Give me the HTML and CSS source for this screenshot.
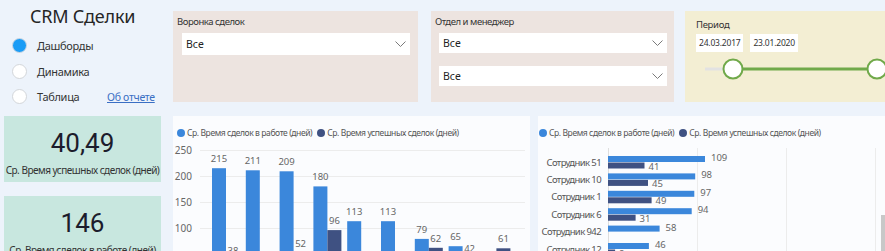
FILE: index.html
```html
<!DOCTYPE html>
<html lang="ru">
<head>
<meta charset="utf-8">
<title>CRM Сделки</title>
<link rel="stylesheet" href="styles.css">
</head>
<body>
<div class="page">
  <aside class="side">
    <div class="brand">CRM Сделки</div>
    <ul class="nav">
      <li class="nav-item"><span class="radio radio-on"></span><span class="nav-label">Дашборды</span></li>
      <li class="nav-item"><span class="radio"></span><span class="nav-label">Динамика</span></li>
      <li class="nav-item"><span class="radio"></span><span class="nav-label">Таблица</span><a class="about" href="#">Об отчете</a></li>
    </ul>
    <div class="kpi">
      <div class="kpi-value">40,49</div>
      <div class="kpi-label">Ср. Время успешных сделок (дней)</div>
    </div>
    <div class="kpi kpi-2">
      <div class="kpi-value">146</div>
      <div class="kpi-label">Ср. Время сделок в работе (дней)</div>
    </div>
  </aside>

  <main class="main">
    <div class="filters">
      <section class="filter f-funnel">
        <div class="filter-title">Воронка сделок</div>
        <div class="select select-tall"><span>Все</span><svg class="chev" width="11" height="6" viewBox="0 0 11 6"><path d="M0.5 0.5 L5.5 5.5 L10.5 0.5" fill="none" stroke="#7a7a7a" stroke-width="1"/></svg></div>
      </section>
      <section class="filter f-dept">
        <div class="filter-title">Отдел и менеджер</div>
        <div class="select"><span>Все</span><svg class="chev" width="11" height="6" viewBox="0 0 11 6"><path d="M0.5 0.5 L5.5 5.5 L10.5 0.5" fill="none" stroke="#7a7a7a" stroke-width="1"/></svg></div>
        <div class="select select-gap"><span>Все</span><svg class="chev" width="11" height="6" viewBox="0 0 11 6"><path d="M0.5 0.5 L5.5 5.5 L10.5 0.5" fill="none" stroke="#7a7a7a" stroke-width="1"/></svg></div>
      </section>
      <section class="filter f-period">
        <div class="period-title">Период</div>
        <div class="dates">
          <span class="date">24.03.2017</span>
          <span class="date">23.01.2020</span>
        </div>
        <svg class="slider" width="210" height="24" viewBox="0 0 210 24">
          <line x1="20" y1="12" x2="40" y2="12" stroke="#e2e2e2" stroke-width="3"/>
          <line x1="48" y1="12" x2="192" y2="12" stroke="#70a94a" stroke-width="3"/>
          <circle cx="48" cy="12" r="9.5" fill="#ffffff" stroke="#70a94a" stroke-width="2"/>
          <circle cx="192" cy="12" r="9.5" fill="#ffffff" stroke="#70a94a" stroke-width="2"/>
        </svg>
      </section>
    </div>

    <div class="charts">
      <section class="chart c-col">
        <div class="legend">
          <span class="lg"><i class="dot dot-a"></i>Ср. Время сделок в работе (дней)</span>
          <span class="lg"><i class="dot dot-b"></i>Ср. Время успешных сделок (дней)</span>
        </div>
        <svg class="plot" width="357" height="116" viewBox="0 0 357 116">
          <g stroke="#ececec" stroke-width="1">
            <line x1="27" y1="10.5" x2="352" y2="10.5"/>
            <line x1="27" y1="36.5" x2="352" y2="36.5"/>
            <line x1="27" y1="62.5" x2="352" y2="62.5"/>
            <line x1="27" y1="88.5" x2="352" y2="88.5"/>
            <line x1="27" y1="114.5" x2="352" y2="114.5"/>
          </g>
          <g class="axis" text-anchor="end">
            <text x="19" y="14">250</text>
            <text x="19" y="40">200</text>
            <text x="19" y="66">150</text>
            <text x="19" y="92">100</text>
          </g>
          <g id="cols"></g>
        </svg>
      </section>
      <section class="chart c-bar">
        <div class="legend legend-2">
          <span class="lg"><i class="dot dot-a"></i>Ср. Время сделок в работе (дней)</span>
          <span class="lg"><i class="dot dot-b"></i>Ср. Время успешных сделок (дней)</span>
        </div>
        <svg class="plot" width="360" height="116" viewBox="0 0 360 116">
          <g stroke="#ececec" stroke-width="1">
            <line x1="70.5" y1="8" x2="70.5" y2="116" stroke="#dedede"/>
            <line x1="159.5" y1="8" x2="159.5" y2="116"/>
            <line x1="248.5" y1="8" x2="248.5" y2="116"/>
            <line x1="337.5" y1="8" x2="337.5" y2="116"/>
          </g>
          <g id="bars"></g>
        </svg>
        <div class="scroll-thumb"></div>
      </section>
    </div>
  </main>
</div>
<script src="chart.js"></script>
</body>
</html>
```

FILE: chart.js
```javascript
(function () {
  var NS = "http://www.w3.org/2000/svg";
  function el(tag, attrs, text) {
    var e = document.createElementNS(NS, tag);
    for (var k in attrs) e.setAttribute(k, attrs[k]);
    if (text !== undefined) e.textContent = text;
    return e;
  }
  // column chart
  var cols = [[215, 38], [211, 20], [209, 52], [180, 96], [113, 22], [113, 24], [79, 62], [65, 42], [30, 61]];
  var g = document.getElementById("cols");
  function y(v) { return 10 + (250 - v) * 0.52; }
  cols.forEach(function (d, i) {
    var x = 39 + i * 33.8;
    [0, 1].forEach(function (s) {
      var v = d[s];
      var bx = x + s * 14;
      var top = y(v);
      if (top - 6 > 116) return;
      if (top < 116) {
        g.appendChild(el("rect", { x: bx.toFixed(1), y: top.toFixed(1), width: 14, height: (116 - top).toFixed(1), "class": s ? "bar-b" : "bar-a" }));
      }
      g.appendChild(el("text", { x: (bx + 7).toFixed(1), y: (top - 6).toFixed(1), "text-anchor": "middle", "class": "val" }, String(v)));
    });
  });
  // bar chart
  var rows = [["Сотрудник 51", 109, 41], ["Сотрудник 10", 98, 45], ["Сотрудник 1", 97, 49], ["Сотрудник 6", 94, 31], ["Сотрудник 942", 58, null], ["Сотрудник 12", 46, 8]];
  var b = document.getElementById("bars");
  rows.forEach(function (r, k) {
    var cy = 22 + k * 17.4;
    b.appendChild(el("text", { x: 63, y: (cy + 3.5).toFixed(1), "text-anchor": "end", "class": "cat" }, r[0]));
    var wa = r[1] * 0.89;
    b.appendChild(el("rect", { x: 70, y: (cy - 6).toFixed(1), width: wa.toFixed(1), height: 6, "class": "bar-a" }));
    b.appendChild(el("text", { x: (70 + wa + 6).toFixed(1), y: (cy - 1).toFixed(1), "class": "val" }, String(r[1])));
    if (r[2] !== null) {
      var wb = r[2] * 0.89;
      b.appendChild(el("rect", { x: 70, y: (cy + 0.5).toFixed(1), width: wb.toFixed(1), height: 6, "class": "bar-b" }));
      b.appendChild(el("text", { x: (70 + wb + 4).toFixed(1), y: (cy + 7.5).toFixed(1), "class": "val" }, String(r[2])));
    }
  });
})();
```

FILE: styles.css
```css
html, body {
  margin: 0;
  padding: 0;
  width: 885px;
  height: 251px;
  overflow: hidden;
  background: #edf3fb;
}
body {
  font-family: "Noto Sans", "Open Sans", sans-serif;
  color: #333333;
}
.page {
  display: flex;
  width: 885px;
  height: 251px;
  overflow: hidden;
}
.side {
  width: 173px;
  flex: none;
  display: flex;
  flex-direction: column;
}
.brand {
  padding: 5px 0 0 30px;
  font-size: 18px;
  line-height: 22px;
  color: #252525;
  letter-spacing: -0.2px;
}
.nav {
  list-style: none;
  margin: 6px 0 0 0;
  padding: 0;
}
.nav-item {
  height: 25.5px;
  display: flex;
  align-items: center;
  padding-left: 12px;
}
.radio {
  width: 15px;
  height: 15px;
  border-radius: 50%;
  box-sizing: border-box;
  border: 1px solid #d3d6da;
  background: #ffffff;
  flex: none;
}
.radio-on {
  background: #1a9cf6;
  border-color: #cfd8e2;
}
.nav-label {
  margin-left: 10px;
  font-size: 11px;
  color: #333;
  width: 60px;
  letter-spacing: -0.3px;
}
.about {
  margin-left: 10px;
  font-size: 10.5px;
  color: #3a6fc4;
  text-decoration: underline;
  letter-spacing: -0.3px;
}
.kpi {
  margin: 6px 0 0 4px;
  width: 157px;
  height: 66px;
  background: #c8e7df;
  display: flex;
  flex-direction: column;
  align-items: center;
  flex: none;
}
.kpi-2 {
  margin-top: 14px;
}
.kpi-value {
  margin-top: 12px;
  font-family: Roboto, "Noto Sans", sans-serif;
  font-size: 26px;
  line-height: 30px;
  color: #1c1c2c;
}
.kpi-label {
  margin-top: 6px;
  font-size: 10px;
  line-height: 13px;
  color: #333;
  white-space: nowrap;
  letter-spacing: -0.5px;
}
.main {
  flex: 1;
  display: flex;
  flex-direction: column;
  min-width: 0;
}
.filters {
  display: flex;
  padding-top: 11px;
  gap: 13px;
  height: 91px;
}
.filter {
  height: 91px;
  box-sizing: border-box;
  background: #ede4e0;
  flex: none;
}
.f-funnel {
  width: 245px;
  padding: 4px 8px 0 4px;
}
.f-dept {
  width: 243px;
  padding: 4px 7px 0 4px;
}
.f-period {
  width: 212px;
  margin-left: -2px;
  background: #f3eed3;
  padding: 7px 0 0 11px;
}
.filter-title {
  font-size: 9.5px;
  line-height: 13px;
  color: #333;
  white-space: nowrap;
  letter-spacing: -0.45px;
}
.select {
  margin: 5px 0 0 4px;
  height: 20px;
  background: #ffffff;
  display: flex;
  align-items: center;
  justify-content: space-between;
  padding: 0 4px;
  font-size: 10.5px;
  color: #222;
}
.f-funnel .select {
  margin-left: 5px;
  margin-top: 5px;
  height: 22px;
}
.select-gap {
  margin-top: 13px;
}
.chev {
  display: block;
}
.period-title {
  font-size: 9.5px;
  line-height: 13px;
  color: #333;
  letter-spacing: -0.3px;
}
.dates {
  display: flex;
  gap: 7px;
  margin-top: 3px;
}
.date {
  background: #ffffff;
  height: 18px;
  line-height: 18px;
  padding: 0 3px;
  font-size: 8.5px;
  color: #333;
  letter-spacing: -0.2px;
}
.slider {
  display: block;
  margin: 5px 0 0 -11px;
}
.charts {
  display: flex;
  gap: 8px;
  margin-top: 14px;
}
.chart {
  background: #fbfcfe;
  height: 140px;
  flex: none;
  position: relative;
}
.c-col {
  width: 357px;
}
.c-bar {
  width: 360px;
}
.legend {
  display: flex;
  height: 24px;
  box-sizing: border-box;
  padding: 9px 0 0 4px;
  font-size: 8.5px;
  line-height: 12px;
  color: #555;
  white-space: nowrap;
  letter-spacing: -0.4px;
}
.legend-2 {
  padding-left: 1px;
}
.lg {
  display: flex;
  align-items: center;
  margin-right: 5px;
}
.dot {
  width: 8px;
  height: 8px;
  border-radius: 50%;
  margin-right: 2px;
  display: inline-block;
}
.dot-a { background: #3b87db; }
.dot-b { background: #3f5182; }
.plot {
  display: block;
}
.axis text {
  font-size: 10px;
  fill: #666;
}
.bar-a { fill: #3b87db; }
.bar-b { fill: #3f5182; }
.val {
  font-size: 9.5px;
  fill: #666;
}
.cat {
  font-size: 9.5px;
  fill: #555;
  letter-spacing: -0.6px;
}
.scroll-thumb {
  position: absolute;
  left: 343px;
  top: 99px;
  width: 5px;
  height: 41px;
  background: #c8c8c8;
}
```
